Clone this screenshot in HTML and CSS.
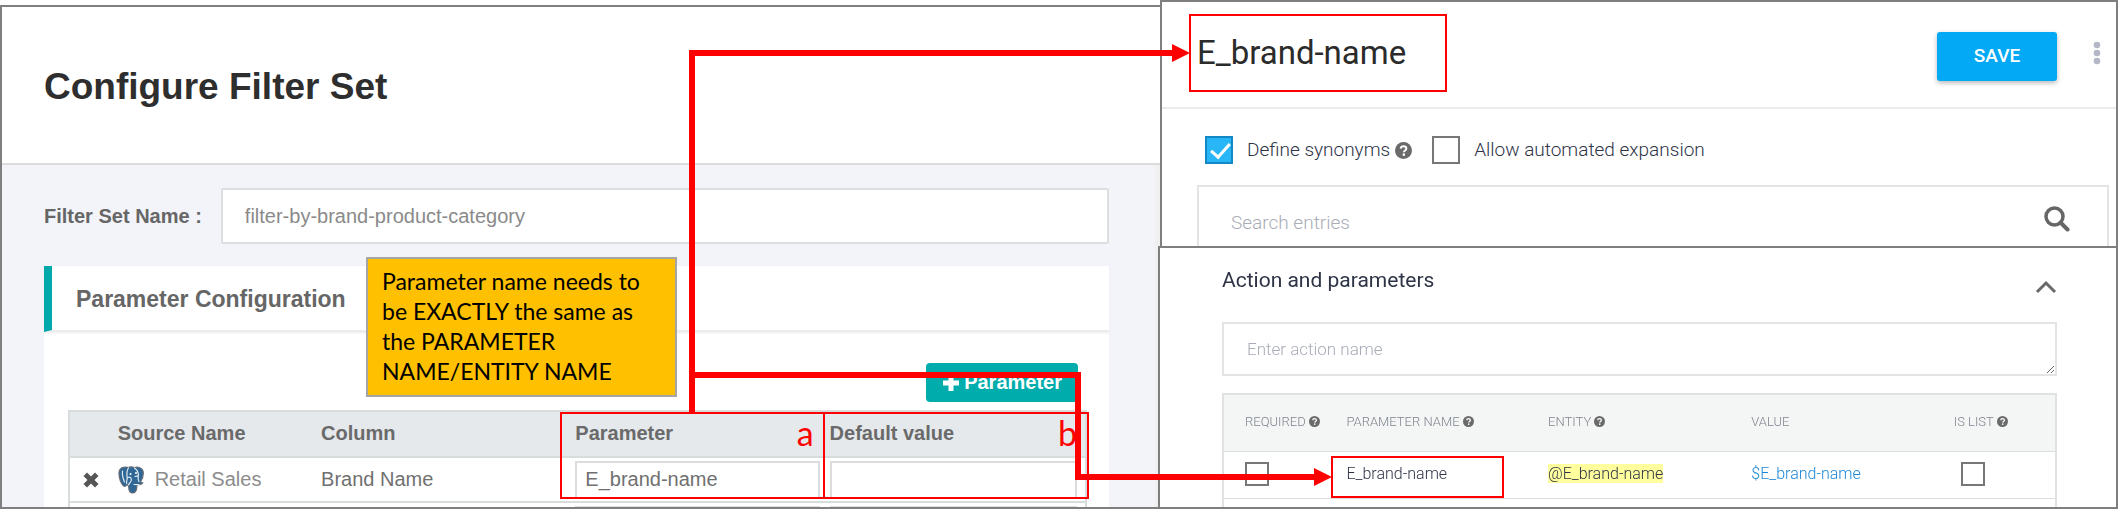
FILE: index.html
```
<!DOCTYPE html>
<html lang="en">
<head>
<meta charset="utf-8">
<title>Configure Filter Set</title>
<link rel="stylesheet" href="styles.css">
</head>
<body>
<svg class="sprite" aria-hidden="true">
  <symbol id="help" viewBox="0 0 16 16">
    <circle cx="8" cy="8" r="8" fill="#6a6a6a"/>
    <path d="M5.4 6.2C5.5 4.6 6.5 3.9 8 3.9c1.600 0 2.700.9 2.700 2.200 0 1.900-2.300 1.900-2.300 3.500" fill="none" stroke="#fff" stroke-width="1.900"/>
    <circle cx="8.300" cy="11.900" r="1.200" fill="#fff"/>
  </symbol>
</svg>
<main class="board">
  <section class="filter-panel">
    <header class="filter-header"><h1>Configure Filter Set</h1></header>
    <div class="filter-body">
      <div class="name-row">
        <label for="set-name">Filter Set Name :</label>
        <input id="set-name" class="set-name" type="text" value="filter-by-brand-product-category">
      </div>
      <section class="card">
        <h2 class="card-title">Parameter Configuration</h2>
        <div class="card-body">
          <div class="toolbar">
            <button class="add-button" type="button">
              <svg width="18" height="18" viewBox="0 0 18 18" aria-hidden="true"><path d="M6.500 1h5v5.500H17v5h-5.500V17h-5v-5.500H1v-5h5.500z" fill="#fff"/></svg>
              <span>Parameter</span>
            </button>
          </div>
          <table class="sources">
            <colgroup><col class="c-del"><col class="c-src"><col class="c-col"><col class="c-par"><col class="c-def"></colgroup>
            <thead>
              <tr><th></th><th>Source Name</th><th>Column</th>
              <th><div class="marked"><span>Parameter</span><span class="mark">a</span></div></th>
              <th><div class="marked"><span>Default value</span><span class="mark">b</span></div></th></tr>
            </thead>
            <tbody>
              <tr>
                <td class="del"><button class="icon-button" type="button" aria-label="Remove">
                  <svg width="16" height="16" viewBox="0 0 16 16" aria-hidden="true"><path d="M4 0.500L8 4.500l4-4L15.500 4l-4 4 4 4L12 15.500l-4-4-4 4L0.500 12l4-4-4-4z" fill="#555"/></svg>
                </button></td>
                <td><div class="source">
                  <svg width="26" height="28" viewBox="0 0 26 28" aria-hidden="true">
                    <path d="M7 1C2.500 1 .8 4 1 8c.2 4 2 9 4 11.500 1.200 1.500 2.500 1 3.500-.4l2-.1c.4 2.500-.3 7.500 3.500 8 3.500.3 4.500-2 4.800-5.500l.3-3c2.200.4 4.500 0 5.700-1.500-1-.4-2-.4-2.300-1C24.500 12.500 26 7.500 24.800 4.500 23.500 1.300 19.500.6 16.500 1.500 13.500.5 11.500.8 10.500 1.500 9.500 1.100 8 1 7 1z" fill="#2f6797" stroke="#666c75" stroke-width="1.200"/>
                    <path d="M10.500 2C8.500 4.500 8.800 9 9.200 12c.2 2-1.200 3.500-.5 5.500M16.500 2c2.500 2 4.500 5 3.800 8.500-.5 2-.2 3.500.6 5M10 11.500c2-.8 3.500 0 3.300 2.500-.1 2-1.600 3-3 4.800M17 10.500c1.500-.6 3-.5 3.300.3M16 18.500l5 .2M4.500 5c-.5 3 .4 7 2 11" fill="none" stroke="#dfe9f1" stroke-width="1.200" stroke-linecap="round"/>
                    <circle cx="12.500" cy="8" r="1" fill="#fff"/><circle cx="18" cy="7" r="1" fill="#fff"/>
                  </svg>
                  <span>Retail Sales</span></div></td>
                <td>Brand Name</td>
                <td><input class="cell-input" type="text" aria-label="Parameter" value="E_brand-name"></td>
                <td><input class="cell-input" type="text" aria-label="Default value"></td>
              </tr>
              <tr>
                <td></td><td></td><td></td>
                <td><input class="cell-input" type="text" aria-label="Parameter, row 2"></td>
                <td><input class="cell-input" type="text" aria-label="Default value, row 2"></td>
              </tr>
            </tbody>
          </table>
        </div>
      </section>
    </div>
    <aside class="note">Parameter name needs to be EXACTLY the same as the PARAMETER NAME/ENTITY NAME</aside>
  </section>

  <div class="agent">
    <section class="entity-panel">
      <header class="entity-header">
        <h2>E_brand-name</h2>
        <button class="save" type="button">SAVE</button>
        <button class="icon-button" type="button" aria-label="More">
          <svg width="8" height="24" viewBox="0 0 8 24" aria-hidden="true"><g fill="#b4b8c6"><circle cx="4" cy="4" r="3.300"/><circle cx="4" cy="12" r="3.300"/><circle cx="4" cy="20" r="3.300"/></g></svg>
        </button>
      </header>
      <div class="options">
        <input id="synonyms" class="check large" type="checkbox" checked>
        <label for="synonyms">Define synonyms</label>
        <svg class="help-large"><use href="#help"/></svg>
        <input id="expansion" class="check large second" type="checkbox">
        <label for="expansion">Allow automated expansion</label>
      </div>
      <div class="search">
        <input type="text" aria-label="Search entries" placeholder="Search entries">
        <svg width="26" height="26" viewBox="0 0 26 26" aria-hidden="true"><circle cx="10.500" cy="10.500" r="8.500" fill="none" stroke="#666" stroke-width="3.500"/><path d="M16.500 16.500l7 7" stroke="#666" stroke-width="4" stroke-linecap="round"/></svg>
      </div>
    </section>

    <section class="action-panel">
      <header class="action-header">
        <h2>Action and parameters</h2>
        <button class="icon-button" type="button" aria-label="Collapse">
          <svg width="22" height="14" viewBox="0 0 22 14" aria-hidden="true"><path d="M2 12l9-9 9 9" fill="none" stroke="#6a6a6a" stroke-width="3"/></svg>
        </button>
      </header>
      <textarea class="action-name" rows="1" aria-label="Action name" placeholder="Enter action name"></textarea>
      <table class="params">
        <colgroup><col class="p-req"><col class="p-name"><col class="p-ent"><col class="p-val"><col class="p-list"></colgroup>
        <thead>
          <tr><th>REQUIRED <svg class="help"><use href="#help"/></svg></th><th>PARAMETER NAME <svg class="help"><use href="#help"/></svg></th><th>ENTITY <svg class="help"><use href="#help"/></svg></th><th>VALUE</th><th>IS LIST <svg class="help"><use href="#help"/></svg></th></tr>
        </thead>
        <tbody>
          <tr>
            <td><input class="check" type="checkbox" aria-label="Required"></td>
            <td>E_brand-name</td>
            <td><span class="entity">@E_brand-name</span></td>
            <td class="value">$E_brand-name</td>
            <td class="list"><input class="check" type="checkbox" aria-label="Is list"></td>
          </tr>
          <tr><td></td><td></td><td></td><td></td><td></td></tr>
        </tbody>
      </table>
    </section>
  </div>

  <svg class="connectors" viewBox="0 0 2118 509" preserveAspectRatio="none" aria-hidden="true">
    <g fill="none" stroke="#f00" stroke-width="2">
      <path d="M561 413h263v85H561zM824 413h264v85H824z"/>
      <path d="M1190 15h256v76h-256z"/>
      <path d="M1332 457h171v40h-171z"/>
    </g>
    <g fill="none" stroke="#f00" stroke-width="6">
      <path d="M692 412V53h482"/>
      <path d="M692 375h386v102h238"/>
    </g>
    <path d="M1172 44l18 9-18 9zM1314 468l18 9-18 9z" fill="#f00"/>
  </svg>
</main>
</body>
</html>
```
FILE: styles.css
```
* { box-sizing: border-box; }

body {
  margin: 0;
  background: #fff;
  font-family: "Liberation Sans", Arial, sans-serif;
  overflow: hidden;
}

h1, h2 { margin: 0; }
input, textarea, button { font-family: inherit; }

.sprite { position: absolute; width: 0; height: 0; }

.board {
  position: relative;
  display: grid;
  grid-template-columns: 1160fr 958fr;
  height: 100vh;
}

.connectors {
  position: absolute;
  inset: 0;
  width: 100%;
  height: 100%;
  pointer-events: none;
}

.icon-button {
  display: flex;
  padding: 0;
  border: 0;
  background: none;
}

/* Filter set form */
.filter-panel {
  position: relative;
  display: flex;
  flex-direction: column;
  min-width: 0;
  margin-top: 5px;
  border: 2px solid #7f7f7f;
  border-right: 0;
  overflow: hidden;
}

.filter-header {
  padding: 59px 42px 56px;
  border-bottom: 2px solid #dcdcdc;
}

.filter-header h1 {
  font-size: 37px;
  line-height: 41px;
  color: #2e2e2e;
}

.filter-body {
  flex: 1;
  padding: 23px 46px 0 42px;
  border-right: 5px solid #f0f0f0;
  background: #f3f4f9;
}

.name-row {
  display: flex;
  align-items: center;
  gap: 19px;
}

.name-row label {
  font-size: 20px;
  font-weight: bold;
  color: #666;
}

.set-name {
  flex: 1;
  height: 56px;
  padding: 0 22px;
  border: 2px solid #dcdfe0;
  border-radius: 2px;
  font-size: 20px;
  color: #8a8a8a;
}

.card {
  margin-top: 22px;
  background: #fff;
}

.card-title {
  padding: 21px 24px 18px;
  border-left: 8px solid #00a9a9;
  border-bottom: 2px solid #ececec;
  box-shadow: 0 1px 2px #ececf0;
  font-size: 23px;
  line-height: 25px;
  color: #666;
}

.card-body { padding: 31px 22px 0 24px; }

.toolbar {
  display: flex;
  justify-content: flex-end;
  padding: 0 9px 8px 0;
}

.add-button {
  display: flex;
  align-items: center;
  gap: 4px;
  height: 39px;
  padding: 0 16px;
  border: 0;
  border-radius: 4px;
  background: #00acac;
  font-size: 20px;
  font-weight: bold;
  color: #fff;
}

.sources, .params {
  width: 100%;
  table-layout: fixed;
  border-collapse: collapse;
}

.sources { border: 2px solid #d9dcdc; font-size: 20px; color: #707070; }
.c-del { width: 4%; }
.c-src { width: 20%; }
.c-col { width: 25%; }
.c-par { width: 25%; }

.sources th, .sources td {
  padding: 0 2px 0 8px;
  border-bottom: 2px solid #d9dcdc;
  text-align: left;
}

.sources td:last-child { padding-right: 8px; }

.sources th {
  height: 46px;
  padding-right: 8px;
  padding-bottom: 2px;
  background: #e5e9ec;
  color: #6a6a6a;
}

.sources td { height: 45px; }
.sources .del { padding-left: 13px; }

.marked { display: flex; align-items: center; justify-content: space-between; }
.mark {
  font: 34px/40px Lato, sans-serif;
  color: #f00;
}

.source { display: flex; align-items: center; gap: 11px; color: #8c8c8c; }

.cell-input {
  display: block;
  width: 100%;
  height: 38px;
  padding: 0 8px;
  border: 2px solid #dcdcdc;
  font-size: 20px;
  color: #707070;
}

.note {
  position: absolute;
  top: 250px;
  left: 364px;
  width: 311px;
  height: 140px;
  padding: 7px 24px 7px 14px;
  border: 2px solid #a5a5a5;
  background: #ffc000;
  font: 23px/30px Lato, sans-serif;
  color: #000;
}

/* Entity editor */
.agent {
  position: relative;
  display: flex;
  flex-direction: column;
  min-width: 0;
  min-height: 0;
  font-family: Roboto, sans-serif;
}

.entity-panel {
  border: 2px solid #7f7f7f;
  border-bottom: 0;
}

.entity-header {
  display: flex;
  align-items: center;
  gap: 36px;
  height: 107px;
  padding: 0 15px 4px 35px;
  border-bottom: 2px solid #ebebeb;
}

.entity-header h2 {
  flex: 1;
  font-size: 33px;
  font-weight: 400;
  color: #2b2b2b;
}

.save {
  width: 120px;
  height: 49px;
  margin-top: 7px;
  padding-bottom: 3px;
  border: 0;
  border-radius: 3px;
  background: #03a9f4;
  box-shadow: 0 2px 5px #b8b8b8;
  font-size: 19px;
  font-weight: 500;
  color: #fff;
}

.options {
  display: flex;
  align-items: center;
  height: 76px;
  padding: 6px 43px 0;
  font-size: 19px;
  font-weight: 300;
  color: #2e3446;
}

.options label { padding-bottom: 2px; }

.check {
  appearance: none;
  display: block;
  flex: none;
  width: 24px;
  height: 24px;
  margin: 0;
  border: 2px solid #777;
  background: #fff;
}

.check.large { width: 28px; height: 28px; margin-right: 14px; }
.check.second { margin-left: 20px; }

.check:checked {
  border-color: #1288c4;
  background: #29b6f6;
}

.check:checked::before {
  content: "";
  display: block;
  width: 8px;
  height: 16px;
  margin: 1px 0 0 8px;
  border: solid #fff;
  border-width: 0 3px 3px 0;
  transform: rotate(42deg);
}

.help-large { width: 17px; height: 17px; margin-left: 5px; }
.help { width: 11px; height: 11px; vertical-align: -1px; }

.search {
  display: flex;
  align-items: center;
  height: 61px;
  margin: 0 7px 0 35px;
  padding: 5px 37px 0 32px;
  border: 2px solid #e4e4e4;
  border-bottom: 0;
}

.search input {
  flex: 1;
  padding: 6px 0 0;
  border: 0;
  outline: 0;
  font-size: 19px;
  font-weight: 300;
}

::placeholder { color: #a9adb8; opacity: 1; }

/* Action and parameters */
.action-panel {
  flex: 1;
  min-height: 0;
  margin-left: -2px;
  padding: 0 59px 0 62px;
  border: 2px solid #7f7f7f;
  background: #fff;
  overflow: hidden;
}

.action-header {
  display: flex;
  align-items: center;
  justify-content: space-between;
  height: 74px;
  padding-bottom: 11px;
}

.action-header h2 {
  font-size: 21px;
  font-weight: 400;
  color: #2e3446;
}

.action-header .icon-button { margin-top: 14px; }

.action-name {
  display: block;
  width: 100%;
  height: 54px;
  padding: 15px 23px;
  border: 2px solid #e4e4e4;
  font-size: 17px;
  line-height: 21px;
  font-weight: 300;
  resize: vertical;
}

.params { margin-top: 17px; border: 2px solid #e0e2e2; font-weight: 300; }
.p-req { width: 12.3%; }
.p-name { width: 24.2%; }
.p-ent { width: 24.4%; }
.p-val { width: 24.3%; }

.params th, .params td {
  padding: 0 0 0 21px;
  border-bottom: 1px solid #dcdede;
  text-align: left;
}

.params th {
  height: 57px;
  padding-bottom: 2px;
  background: #f4f6f6;
  font-size: 13px;
  font-weight: 300;
  color: #80848f;
  white-space: nowrap;
}

.params td { height: 47px; padding-bottom: 2px; font-size: 16px; color: #2e3446; }
.params .list { padding-left: 28px; }
.params .value { color: #1e88d8; }
.entity { background: #ffff9e; }
```
